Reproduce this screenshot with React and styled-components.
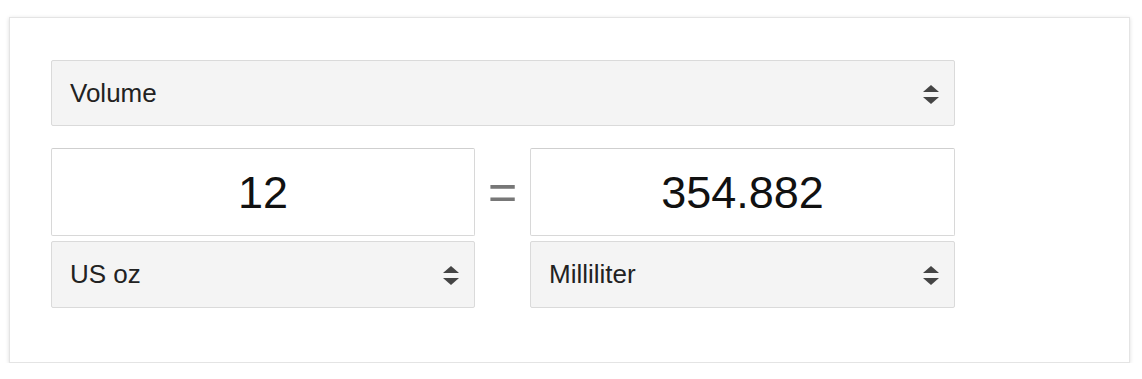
import styled, { createGlobalStyle } from 'styled-components';

const GlobalStyle = createGlobalStyle`
  html, body {
    margin: 0;
    padding: 0;
    background: #ffffff;
  }
  body {
    font-family: "Liberation Sans", Arial, sans-serif;
    color: #222;
  }
`;

const Card = styled.div`
  box-sizing: border-box;
  width: 1121px;
  height: 346px;
  margin: 17px 0 0 9px;
  padding: 42px 0 0 41px;
  background: #fff;
  border: 1px solid #e4e4e4;
  box-shadow: 0 1px 4px rgba(0, 0, 0, 0.14);
`;

const Content = styled.div`
  width: 904px;
  display: flex;
  flex-direction: column;
  gap: 22px;
`;

const Grid = styled.div`
  display: grid;
  grid-template-columns: 424px 55px 425px;
  grid-template-rows: 88px 67px;
  row-gap: 5px;
`;

const SelectBox = styled.div`
  box-sizing: border-box;
  height: ${(p) => p.$h || 67}px;
  display: flex;
  align-items: center;
  justify-content: space-between;
  padding: 0 15px 0 18px;
  background: #f4f4f4;
  border: 1px solid #dadada;
  border-radius: 2px;
  font-size: 26px;
  color: #222;
`;

const Arrows = styled.div`
  display: flex;
  flex-direction: column;
  gap: 5px;
  margin-top: 2px;
`;

const Tri = styled.span`
  width: 0;
  height: 0;
  border-left: 8px solid transparent;
  border-right: 8px solid transparent;
  ${(p) => (p.$down ? 'border-top: 7px solid #444;' : 'border-bottom: 7px solid #444;')}
`;

const NumberBox = styled.div`
  box-sizing: border-box;
  height: 88px;
  display: flex;
  align-items: center;
  justify-content: center;
  background: #fff;
  border: 1px solid #d8d8d8;
  border-top-color: #cfcfcf;
  border-radius: 2px;
  font-size: 45px;
  color: #111;
  padding-top: 2px;
`;

const Equals = styled.div`
  display: flex;
  align-items: center;
  justify-content: center;
  font-size: 50px;
  color: #777;
  line-height: 1;
`;

const Select = ({ label, h }) => (
  <SelectBox $h={h}>
    <span>{label}</span>
    <Arrows>
      <Tri />
      <Tri $down />
    </Arrows>
  </SelectBox>
);

export default function App() {
  return (
    <>
      <GlobalStyle />
      <Card>
        <Content>
          <Select label="Volume" h={66} />
          <Grid>
            <NumberBox>12</NumberBox>
            <Equals>=</Equals>
            <NumberBox>354.882</NumberBox>
            <Select label="US oz" />
            <div />
            <Select label="Milliliter" />
          </Grid>
        </Content>
      </Card>
    </>
  );
}
